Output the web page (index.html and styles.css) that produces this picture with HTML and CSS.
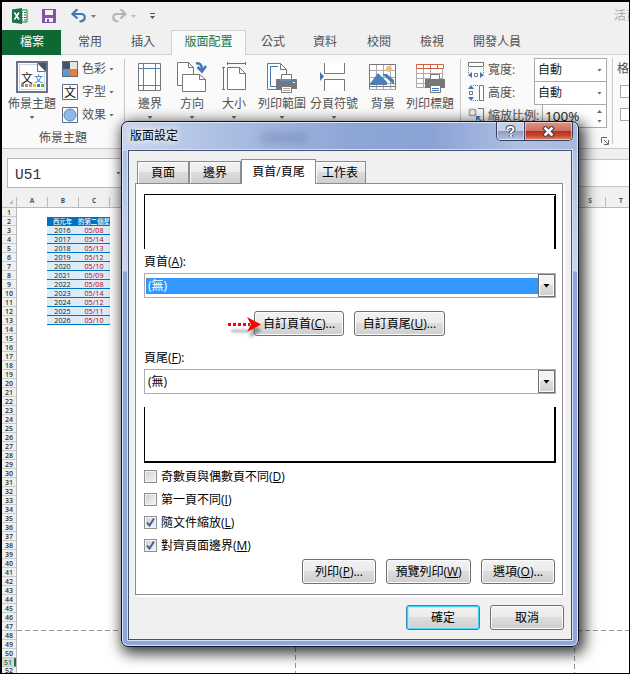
FILE: index.html
```html
<!DOCTYPE html>
<html lang="zh-Hant">
<head>
<meta charset="utf-8">
<title>版面設定</title>
<link rel="stylesheet" href="styles.css">
</head>
<body>
<div class="app">
  <header class="quickbar">
    <svg class="q-excel" width="16" height="16" viewBox="0 0 16 16"><path d="M8 2h7v12H8z" fill="#fff" stroke="#1e7145"/><path d="M9 4.500h5M9 7h5M9 9.500h5M9 12h5" stroke="#1e7145" stroke-width="1.200"/><path d="M11.500 3v10" stroke="#fff"/><path d="M0 1.500 10 0v16L0 14.500z" fill="#1e7145"/><path d="m2.500 4.500 4.500 7M7 4.500l-4.500 7" stroke="#fff" stroke-width="1.600"/></svg>
    <svg class="q-save" width="14" height="14" viewBox="0 0 14 14"><path d="M0 0h14v14H0z" fill="#8652a8"/><path d="M3 1h8v5H3zM3 9h8v4H3z" fill="#f5f0f7"/><path d="M5 10h2v3H5z" fill="#8652a8"/></svg>
    <svg class="q-undo" width="16" height="14" viewBox="0 0 16 14"><path d="M2 5h8c5 0 5.500 7-1.500 7.500" fill="none" stroke="#3f78b5" stroke-width="2.200"/><path d="M6.500 0 1.500 5l5 4.500" fill="none" stroke="#3f78b5" stroke-width="2.200"/></svg>
    <svg class="q-arrow" width="5" height="3" viewBox="0 0 5 3"><path d="M0 0h5L2.500 3z" fill="#777"/></svg>
    <svg class="q-redo" width="16" height="14" viewBox="0 0 16 14"><path d="M14 5H6C1 5 .5 12 7.500 12.500" fill="none" stroke="#b5b5b5" stroke-width="2.200"/><path d="m9.500 0 5 5-5 4.500" fill="none" stroke="#b5b5b5" stroke-width="2.200"/></svg>
    <svg class="q-arrow" width="5" height="3" viewBox="0 0 5 3"><path d="M0 0h5L2.500 3z" fill="#bbb"/></svg>
    <svg class="q-more" width="5" height="7" viewBox="0 0 5 7"><path d="M0 0h5v1H0zM0 3h5L2.500 6z" fill="#555"/></svg>
    <span class="doc-title">活頁</span>
  </header>

  <nav class="tabs">
    <span class="tab-file">檔案</span>
    <span class="tab t-home">常用</span>
    <span class="tab t-insert">插入</span>
    <span class="tab-active">版面配置</span>
    <span class="tab t-formula">公式</span>
    <span class="tab t-data">資料</span>
    <span class="tab t-review">校閱</span>
    <span class="tab t-view">檢視</span>
    <span class="tab t-dev">開發人員</span>
  </nav>

  <section class="ribbon">
    <div class="group themes">
      <div class="themes-row">
        <div class="big theme">
          <svg width="32" height="32" viewBox="0 0 32 32"><path d="M1 1h30v30H1z" fill="#fff" stroke="#66738a" stroke-width="2"/><path d="M3.500 3.500h18l7 7v18h-25z" fill="#fff" stroke="#cfd4dc"/><path d="M21 2h9v9z" fill="#44546a"/><path d="M21.500 3v7.500H29" fill="#fff" stroke="#66738a"/><path d="M5 23h3v3H5z" fill="#5b9bd5"/><path d="M9 23h3v3H9z" fill="#ed7d31"/><path d="M13 23h3v3h-3z" fill="#a5a5a5"/><path d="M17 23h3v3h-3z" fill="#ffc000"/><path d="M21 23h3v3h-3z" fill="#4472c4"/><path d="M25 23h3v3h-3z" fill="#70ad47"/><text x="5" y="21.500" font-size="12" fill="#222">文</text><text x="18" y="21" font-size="9" fill="#3670aa">文</text></svg>
          <span>佈景主題</span>
          <i class="caret"></i>
        </div>
        <div class="small-list">
          <div class="small"><svg width="16" height="16" viewBox="0 0 16 16"><path d="M0 0h16v16H0z" fill="#5d6b80"/><path d="M1 1h7v7H1z" fill="#44546a"/><path d="M8 1h7v7H8z" fill="#e7e6e6"/><path d="M1 8h7v7H1z" fill="#5b9bd5"/><path d="M8 8h7v7H8z" fill="#ed7d31"/></svg><span>色彩</span><i class="caret"></i></div>
          <div class="small"><svg width="16" height="16" viewBox="0 0 16 16"><path d="M.5.500h15v15H.5z" fill="#fff" stroke="#5d6b80"/><text x="2" y="12.500" font-size="12" fill="#111">文</text></svg><span>字型</span><i class="caret"></i></div>
          <div class="small"><svg width="16" height="16" viewBox="0 0 16 16"><path d="M.5.500h15v15H.5z" fill="#fff" stroke="#5d6b80"/><circle cx="8" cy="8" r="6" fill="#8db8e8" stroke="#4d88c8"/></svg><span>效果</span><i class="caret"></i></div>
        </div>
      </div>
      <div class="group-name">佈景主題</div>
    </div>

    <div class="group page-setup">
      <div class="big w42">
        <svg width="32" height="32" viewBox="0 0 32 32"><path d="M4.500 2.500h22v27h-22z" fill="#fff" stroke="#777"/><path d="M9.500 3v26M21.500 3v26M5 7.500h21M5 24.500h21" stroke="#4c83ba" fill="none"/></svg>
        <span>邊界</span><i class="caret"></i>
      </div>
      <div class="big w42">
        <svg width="32" height="32" viewBox="0 0 32 32"><path d="M1.500 1.500h11l5 5v18h-16z" fill="#fff" stroke="#777"/><path d="M12.500 1.500v5h5" fill="none" stroke="#777"/><path d="M6.500 13.500h17l6 5v12h-23z" fill="#fff" stroke="#777"/><path d="M23.500 13.500v5h6" fill="none" stroke="#777"/><path d="M20 2.500c4-1 6 2 6 6" fill="none" stroke="#4178b4" stroke-width="2.500"/><path d="m21.500 6 4.500 4.500L30 5" fill="none" stroke="#4178b4" stroke-width="2.500"/></svg>
        <span>方向</span><i class="caret"></i>
      </div>
      <div class="big w42">
        <svg width="32" height="32" viewBox="0 0 32 32"><path d="M9.500 6.500h12l6 6v16h-18z" fill="#fff" stroke="#777"/><path d="M21.500 6.500v6h6" fill="none" stroke="#777"/><path d="M9 2.500h18M9.500 1v3M27.500 1v3M5.500 7v21M4 6.500h3M4 28.500h3" stroke="#4178b4" fill="none"/></svg>
        <span>大小</span><i class="caret"></i>
      </div>
      <div class="big w54">
        <svg width="32" height="32" viewBox="0 0 32 32"><path d="M1.500 2.500h13l6 6v20h-19z" fill="#fff" stroke="#777"/><path d="M14.500 2.500v6h6" fill="none" stroke="#777"/><path d="M12 5.500H4.500v20H12" fill="none" stroke="#4178b4"/><path d="M10 18h20q1 0 1 1v9H10z" fill="#777"/><path d="M15.500 13.500h10v6h-10z" fill="#fff" stroke="#777"/><path d="M14 18h13v2H14z" fill="#5b90c4"/><path d="M15.500 25.500h10v6h-10z" fill="#fff" stroke="#777"/><path d="M17 27.500h7M17 29.500h7" stroke="#aaa"/><path d="M27 21h2v1h-2z" fill="#fff"/></svg>
        <span>列印範圍</span><i class="caret"></i>
      </div>
      <div class="big w50">
        <svg width="32" height="32" viewBox="0 0 32 32"><path d="M6.500 2v10.500h20V2M6.500 30V18.500h20V30" fill="#fff" stroke="#777"/><path d="m2 11 4 4.500L2 20z" fill="#4178b4"/></svg>
        <span>分頁符號</span><i class="caret"></i>
      </div>
      <div class="big w48">
        <svg width="32" height="32" viewBox="0 0 32 32"><path d="M2.500 3.500h26v25h-26zM9.500 3v25M16.500 3v25M23.500 3v25M2 9.500h26M2 16.500h26M2 22.500h26" fill="#fff" stroke="#aaa"/><path d="M2.500 28V3.500h26V28" fill="none" stroke="#777"/><circle cx="22" cy="8" r="3" fill="#edbd7a"/><path d="m2 24 9-12 9 9V24z" fill="#4b80b7"/><path d="m15 13 12 11V19l-7-6z" fill="#4b80b7"/><path d="M2 25.500h27" stroke="#777"/></svg>
        <span>背景</span>
      </div>
      <div class="big w46">
        <svg width="32" height="32" viewBox="0 0 32 32"><path d="M2.500 7.500h26v19h-26zM9.500 7v19M16.500 7v19M2 12.500h26M2 17.500h26M2 22.500h26" fill="#fff" stroke="#aaa"/><path d="M2.500 3.500h27v4h-27zM9.500 3v4M16.500 3v4M23.500 3v4" fill="#fff" stroke="#d35f42"/><path d="M11 18h20v9H11z" fill="#777"/><path d="M16.500 13.500h9v6h-9z" fill="#fff" stroke="#777"/><path d="M15 18h13v2H15z" fill="#777"/><path d="M16.500 24.500h10v7h-10z" fill="#fff" stroke="#777"/><path d="M18 27.500h7M18 29.500h7" stroke="#4178b4"/></svg>
        <span>列印標題</span>
      </div>
    </div>

    <div class="group scale">
      <div class="field"><svg width="16" height="16" viewBox="0 0 16 16"><path d="M.5.500h15v4H.5z" fill="#fff" stroke="#777"/><path d="M.5 6v6M15.500 6v6" stroke="#777" stroke-dasharray="1 1"/><path d="m0 13 4-3v6zM16 13l-4-3v6z" fill="#4178b4"/><path d="M6.500 11.500h3v3h-3z" fill="#fff" stroke="#777"/></svg><span>寬度:</span><div class="picker">自動<i class="caret"></i></div></div>
      <div class="field"><svg width="16" height="16" viewBox="0 0 16 16"><path d="M11.500.500h4v15h-4z" fill="#fff" stroke="#777"/><path d="M5 .5h6M5 15.500h6" stroke="#777" stroke-dasharray="1 1"/><path d="m3 0 3 4H0zM3 16l3-4H0z" fill="#4178b4"/><path d="M1.500 6.500h3v3h-3z" fill="#fff" stroke="#777"/></svg><span>高度:</span><div class="picker">自動<i class="caret"></i></div></div>
      <div class="field"><svg width="16" height="16" viewBox="0 0 16 16"><path d="M1.500 1.500h6v6h-6z" fill="none" stroke="#777" stroke-dasharray="1 1" stroke-width="2"/><path d="M10 .5h5.500v15H10" fill="none" stroke="#777"/><path d="M8 8h5l-2 2 3 3-1 1-3-3-2 2z" fill="#4178b4"/></svg><span>縮放比例:</span><div class="picker spin">100%<b><i class="caret up"></i><i class="caret"></i></b></div></div>
      <svg class="launcher" width="8" height="8" viewBox="0 0 8 8"><path d="M.5 6V.5H6M3 3l4 4M7.500 3v4.500H3" fill="none" stroke="#666"/></svg>
    </div>
    <div class="group grid-opts"><span>格</span><i class="box"></i><i class="box"></i></div>
  </section>

  <section class="formula">
    <div class="namebox"><span>U51</span><i class="caret"></i></div>
    <div class="fx"></div>
  </section>

  <section class="sheet">
    <div class="colheads"><span class="corner"><i></i></span><span>A</span><span>B</span><span>C</span><span class="rest"></span><span>S</span><span>T</span></div>
    <div class="sheet-body">
      <div class="rowheads"><b>1</b><b>2</b><b>3</b><b>4</b><b>5</b><b>6</b><b>7</b><b>8</b><b>9</b><b>10</b><b>11</b><b>12</b><b>13</b><b>14</b><b>15</b><b>16</b><b>17</b><b>18</b><b>19</b><b>20</b><b>21</b><b>22</b><b>23</b><b>24</b><b>25</b><b>26</b><b>27</b><b>28</b><b>29</b><b>30</b><b>31</b><b>32</b><b>33</b><b>34</b><b>35</b><b>36</b><b>37</b><b>38</b><b>39</b><b>40</b><b>41</b><b>42</b><b>43</b><b>44</b><b>45</b><b>46</b><b>47</b><b>48</b><b>49</b><b>50</b><b class="current">51</b><b>52</b></div>
      <div class="cells">
        <div class="data">
          <strong>西元年</strong><strong>的第二個星</strong>
          <span>2016</span><em>05/08</em>
          <span>2017</span><em>05/14</em>
          <span>2018</span><em>05/13</em>
          <span>2019</span><em>05/12</em>
          <span>2020</span><em>05/10</em>
          <span>2021</span><em>05/09</em>
          <span>2022</span><em>05/08</em>
          <span>2023</span><em>05/14</em>
          <span>2024</span><em>05/12</em>
          <span>2025</span><em>05/11</em>
          <span>2026</span><em>05/10</em>
        </div>
        <svg class="breaks" width="612" height="465" viewBox="0 0 612 465"><path d="M0 422.500h612M278.500 423v42M557.500 0v465" fill="none" stroke="#999" stroke-dasharray="5 3"/></svg>
      </div>
    </div>
  </section>
</div>

<div class="dialog">
  <div class="titlebar">
    <span class="dialog-title">版面設定</span>
    <i class="glass-smudge"></i>
    <div class="winbtns">
      <span class="help"><svg width="11" height="13" viewBox="0 0 11 13"><path d="M2.500 4.500q0-2.500 3-2.500t3 2.300q0 1.200-1.500 2-1.200.7-1.200 1.700M5.800 10v1.500" fill="none" stroke="#414a63" stroke-width="4"/><path d="M2.500 4.500q0-2.500 3-2.500t3 2.300q0 1.200-1.500 2-1.200.7-1.200 1.700M5.800 9.800v2" fill="none" stroke="#fff" stroke-width="2"/></svg></span>
      <span class="close"><svg width="13" height="11" viewBox="0 0 13 11"><path d="m3.500 2.500 6 6M9.500 2.500l-6 6" stroke="#52404c" stroke-width="4.800" stroke-linecap="square"/><path d="m3.500 2.500 6 6M9.500 2.500l-6 6" stroke="#fff" stroke-width="2.600" stroke-linecap="square"/></svg></span>
    </div>
  </div>
  <div class="client">
    <div class="dtabs"><span>頁面</span><span>邊界</span><span class="on">頁首/頁尾</span><span class="last">工作表</span></div>
    <div class="panel">
      <div class="preview head"><i></i></div>
      <label class="cap">頁首(<u>A</u>):</label>
      <div class="combo"><span class="value selected">(無)</span><span class="drop"><i></i></span></div>
      <div class="custom-row">
        <span class="btn b90">自訂頁首(<u>C</u>)...</span><span class="btn b91">自訂頁尾(<u>U</u>)...</span>
        <svg class="pointer" width="38" height="22" viewBox="0 0 38 22"><defs><filter id="soft"><feGaussianBlur stdDeviation="1.500"/></filter></defs><path d="m22 7 13 6-13 8 3-7zM4 13h18v2H4z" fill="#555" opacity=".6" filter="url(#soft)"/><path d="M1 7.500h22" stroke="#f00" stroke-width="3" stroke-dasharray="3 2"/><path d="m20 0 14 7.500L20 15l4-7.500z" fill="#f00"/></svg>
      </div>
      <label class="cap cap-foot">頁尾(<u>F</u>):</label>
      <div class="combo"><span class="value">(無)</span><span class="drop"><i></i></span></div>
      <div class="preview foot"><i></i></div>
      <div class="checks">
        <div class="check"><i></i><span>奇數頁與偶數頁不同(<u>D</u>)</span></div>
        <div class="check"><i></i><span>第一頁不同(<u>I</u>)</span></div>
        <div class="check"><i><svg width="9" height="9" viewBox="0 0 9 9"><path d="m1 4.500 2.500 3L8 .5" fill="none" stroke="#4a5f97" stroke-width="2"/></svg></i><span>隨文件縮放(<u>L</u>)</span></div>
        <div class="check"><i><svg width="9" height="9" viewBox="0 0 9 9"><path d="m1 4.500 2.500 3L8 .5" fill="none" stroke="#4a5f97" stroke-width="2"/></svg></i><span>對齊頁面邊界(<u>M</u>)</span></div>
      </div>
      <div class="panel-btns"><span class="btn b74">列印(<u>P</u>)...</span><span class="btn b85">預覽列印(<u>W</u>)</span><span class="btn b74">選項(<u>O</u>)...</span></div>
    </div>
    <div class="dialog-btns"><span class="btn b74 default">確定</span><span class="btn b74">取消</span></div>
  </div>
</div>
</body>
</html>
```
FILE: styles.css
```css
* { box-sizing: border-box; }
body {
  margin: 0;
  width: 630px;
  height: 674px;
  overflow: hidden;
  position: relative;
  font: 12px/16px "Open Sans", "Noto Sans CJK TC", sans-serif;
  color: #505050;
  white-space: nowrap;
}
i, em { font-style: normal; }
svg { display: block; flex: none; }
svg text { font-family: "Noto Sans CJK TC", sans-serif; }
u { text-underline-offset: 1px; }

.app {
  width: 630px;
  height: 674px;
  border: 1px solid #000;
  border-width: 2px 1px 1px 2px;
  background: #f0f0f0;
  display: flex;
  flex-direction: column;
  overflow: hidden;
}
.caret {
  width: 5px;
  height: 3px;
  background: #6a6a6a;
  clip-path: polygon(0 0, 100% 0, 50% 100%);
  flex: none;
}
.caret.up { transform: rotate(180deg); }

/* quick access */
.quickbar { height: 28px; display: flex; align-items: center; flex: none; padding-left: 10px; }
.q-save { margin-left: 14px; }
.q-undo { margin-left: 15px; }
.q-arrow { margin-left: 4px; }
.q-redo { margin-left: 15px; }
.q-more { margin-left: 14px; }
.doc-title { margin-left: 459px; color: #aaa; }

/* ribbon tabs */
.tabs { height: 25px; display: flex; flex: none; border-bottom: 1px solid #d0d0d0; line-height: 24px; }
.tab-file { width: 59px; height: 25px; background: #0e6834; color: #fff; text-align: center; padding-left: 1px; }
.tab-active {
  width: 75px;
  height: 25px;
  margin-left: 16px;
  border: 1px solid #d0d0d0;
  border-bottom: 0;
  background: #fafafa;
  color: #217346;
  text-align: center;
  line-height: 22px;
}
.t-home { margin-left: 17px; }
.t-insert { margin-left: 29px; }
.t-formula { margin-left: 15px; }
.t-data { margin-left: 28px; }
.t-review { margin-left: 30px; }
.t-view, .t-dev { margin-left: 29px; }

/* ribbon */
.ribbon { height: 94px; display: flex; flex: none; background: #fafafa; border-bottom: 1px solid #c6c6c6; }
.group { height: 85px; margin-top: 4px; border-right: 1px solid #c8c8c8; flex: none; }
.themes { width: 123px; }
.themes-row { display: flex; padding-left: 6px; height: 71px; }
.big { display: flex; flex-direction: column; align-items: center; padding-top: 2px; }
.big span { margin-top: 2px; height: 19px; line-height: 18px; }
.big .caret { margin-top: 2px; }
.theme { width: 48px; }
.small-list { display: flex; flex-direction: column; gap: 7px; padding: 2px 0 0 6px; }
.small { height: 16px; display: flex; align-items: center; }
.small span { margin: 0 3px 0 4px; }
.group-name { text-align: center; }
.page-setup { width: 336px; padding-left: 4px; display: flex; }
.w42 { width: 42px; }
.w46 { width: 46px; }
.w48 { width: 48px; }
.w50 { width: 50px; }
.w54 { width: 54px; }
.scale { width: 152px; padding-left: 7px; margin-top: 3px; height: 86px; }
.field { display: flex; align-items: center; height: 23px; width: 139px; }
.field span { margin-left: 4px; }
.picker {
  margin-left: auto;
  width: 73px;
  height: 24px;
  margin-bottom: -1px;
  border: 1px solid #ababab;
  background: #fff;
  display: flex;
  align-items: center;
  justify-content: space-between;
  padding: 0 4px 0 3px;
  color: #222;
}
.spin { width: 65px; font-size: 13.500px; padding-left: 2px; }
.spin b { display: flex; flex-direction: column; gap: 7px; }
.launcher { margin: 10px 0 0 133px; }
.grid-opts { padding-left: 4px; border: 0; width: 16px; }
.grid-opts span { display: block; padding-top: 2px; width: 12px; }
.box { display: block; width: 13px; height: 13px; border: 1px solid #aaa; background: #fff; margin: 8px 0 10px 3px; }

/* name box */
.formula { height: 48px; flex: none; display: flex; padding: 9px 0 0 5px; }
.namebox {
  width: 117px;
  height: 30px;
  border: 1px solid #b9b9b9;
  background: #fff;
  display: flex;
  align-items: center;
  justify-content: space-between;
  padding: 0 2px 0 7px;
  font: 14.500px/28px "Liberation Mono", monospace;
  color: #333;
}
.namebox span { padding-top: 3px; }
.fx { flex: 1; margin: 1px 0 0 8px; height: 28px; border: 1px solid #c6c6c6; border-right: 0; background: #fff; }

/* worksheet */
.sheet { flex: 1; display: flex; flex-direction: column; min-height: 0; }
.colheads { height: 11px; flex: none; display: flex; border-bottom: 1px solid #b9b9b9; font: bold 6.500px/8px "Open Sans", sans-serif; text-align: center; }
.colheads span { width: 31px; border-right: 1px solid #bbb; flex: none; }
.colheads .corner { width: 15px; display: flex; justify-content: flex-end; align-items: flex-end; padding: 0 3px 3px 0; }
.corner i { width: 4px; height: 4px; background: #bbb; clip-path: polygon(100% 0, 100% 100%, 0 100%); }
.colheads .rest { width: 465px; }
.sheet-body { flex: 1; display: flex; min-height: 0; overflow: hidden; }
.rowheads { width: 15px; border-right: 1px solid #b9b9b9; flex: none; font: 600 7px/9px "Open Sans", sans-serif; text-align: center; }
.rowheads b { display: block; height: 9px; border-bottom: 1px solid #c9c9c9; font-weight: 600; color: #333; line-height: 9px; }
.rowheads .current { background: #d8d8d8; color: #217346; border-right: 2px solid #217346; }
.rowheads b:last-child { height: 7px; line-height: 8px; border: 0; }
.cells { flex: 1; background: #fff; position: relative; }
.breaks { position: absolute; left: 0; top: 0; }
.data {
  margin: 9px 0 0 30px;
  width: 63px;
  display: grid;
  grid-template-columns: 31px 32px;
  grid-auto-rows: 9px;
  font: 7.200px/8px "Open Sans", "Noto Sans CJK TC", sans-serif;
  text-align: center;
  color: #222;
}
.data strong { background: #0070c0; color: #fff; font-weight: 500; overflow: hidden; font-size: 6.400px; line-height: 9px; }
.data span, .data em { background: #ddebf7; border-bottom: 1px solid #0070c0; line-height: 8px; }
.data em { color: #c00000; }

/* dialog */
.dialog {
  position: absolute;
  left: 121px;
  top: 121px;
  width: 458px;
  height: 526px;
  border: 1px solid #10141f;
  border-radius: 7px;
  box-shadow: inset 0 0 0 1px #dce5f6, 3px 4px 14px 3px rgba(0, 0, 0, .75);
  padding: 0 6px;
  background:
    linear-gradient(90deg, #c9d5ed 0, #a9bce2 25%, #8ea6d6 50%, #8ba3d4 68%, #b0c0e4 88%, #a8b9df 100%) 0 0 / 100% 29px no-repeat,
    linear-gradient(180deg, #a9bce3 0, #cad5ee 149px, #8ea6d9 150px, #8fa8dc 100%);
  color: #000;
}
.titlebar { height: 28px; display: flex; align-items: flex-start; position: relative; }
.dialog-title { padding: 6px 0 0 2px; text-shadow: 0 0 6px #fff, 0 0 8px #fff; }
.glass-smudge { width: 46px; height: 10px; margin: 11px 0 0 83px; background: rgba(50, 70, 120, .22); filter: blur(4px); }
.winbtns { position: absolute; right: -1px; top: 0; display: flex; height: 19px; border: 1px solid #35405c; border-top: 0; border-radius: 0 0 5px 5px; overflow: hidden; }
.winbtns span { display: flex; align-items: center; justify-content: center; box-shadow: inset 0 0 0 1px rgba(255, 255, 255, .5); }
.help { width: 28px; background: linear-gradient(#c5d0e5 48%, #8b9bbe 50%, #b5c4e1); border-right: 1px solid #35405c; }
.close { width: 47px; background: linear-gradient(#dc9687 0, #cf6f61 48%, #b4301f 50%, #c6452d 75%, #e18b62); }
.client {
  width: 444px;
  height: 490px;
  background: #f0f0f0;
  border: 1px solid #43506f;
  box-shadow: 0 0 0 1px #d5dff3;
  padding: 8px 0 0 6px;
}
.dtabs { height: 24px; display: flex; align-items: flex-end; padding-left: 2px; }
.dtabs span {
  width: 52px;
  height: 22px;
  border: 1px solid #898c95;
  border-bottom: 0;
  background: linear-gradient(#f3f3f3 0, #ebebeb 48%, #dcdcdc 50%, #cfcfcf);
  text-align: center;
  line-height: 22px;
  box-shadow: inset 1px 1px #fafafa;
}
.dtabs .on { width: 75px; height: 25px; margin-bottom: -1px; background: #fff; line-height: 24px; z-index: 1; }
.dtabs .last { width: 50px; border-left: 0; padding-right: 1px; }
.panel {
  width: 428px;
  height: 412px;
  background: #fff;
  border: 1px solid #898c95;
  box-shadow: 2px 2px #fff;
  padding: 10px 0 0 8px;
}
.preview { width: 412px; display: flex; justify-content: flex-end; border-left: 1px solid #000; }
.preview i { width: 1px; background: #000; }
.head { height: 55px; border-top: 1px solid #000; border-right: 1px solid #000; }
.head i { margin-top: 1px; }
.foot { height: 56px; margin-top: 13px; border-bottom: 2px solid #000; border-right: 1px solid #000; }
.cap { display: block; height: 24px; line-height: 26px; }
.cap-foot { margin-top: 9px; }
.combo { width: 412px; height: 25px; border: 1px solid #abadb3; display: flex; align-items: center; padding-left: 1px; }
.value { width: 392px; height: 16px; line-height: 14px; padding-left: 1px; border: 1px solid transparent; }
.selected { background: #3399ff; border: 1px dotted #c86a19; color: #fff; }
.drop {
  width: 17px;
  height: 23px;
  border: 1px solid #707070;
  background: linear-gradient(#f2f2f2 48%, #dddddd 50%, #cfcfcf);
  box-shadow: inset 0 0 0 1px #fbfbfb;
  display: flex;
  align-items: center;
  justify-content: center;
}
.drop i { width: 7px; height: 4px; background: #000; clip-path: polygon(0 0, 100% 0, 50% 100%); }
.custom-row { display: flex; gap: 10px; padding: 13px 0 0 110px; position: relative; }
.btn {
  height: 25px;
  border: 1px solid #707070;
  border-radius: 3px;
  background: linear-gradient(#f2f2f2, #ebebeb 48%, #dddddd 50%, #cfcfcf);
  box-shadow: inset 0 0 0 1px #fbfbfb;
  text-align: center;
  line-height: 23px;
}
.b74 { width: 74px; }
.b85 { width: 85px; }
.b90 { width: 90px; }
.b91 { width: 91px; }
.pointer { position: absolute; left: 83px; top: 19px; }
.checks { padding-top: 5px; display: flex; flex-direction: column; gap: 7px; }
.check { height: 16px; display: flex; align-items: center; gap: 4px; }
.check span { padding-top: 1px; }
.check i {
  width: 13px;
  height: 13px;
  border: 1px solid #8e8f8f;
  background: linear-gradient(135deg, #cbcfd5, #f6f6f6);
  box-shadow: inset 0 0 0 1px #f4f4f4;
  display: flex;
  align-items: center;
  justify-content: center;
}
.panel-btns { display: flex; gap: 10px; padding: 6px 0 0 158px; }
.dialog-btns { display: flex; gap: 10px; padding: 10px 0 0 271px; }
.default { border-color: #3c7fb1; box-shadow: inset 0 0 0 1px #45d0f5, inset 0 0 0 2px #b5ecfb; }
```
